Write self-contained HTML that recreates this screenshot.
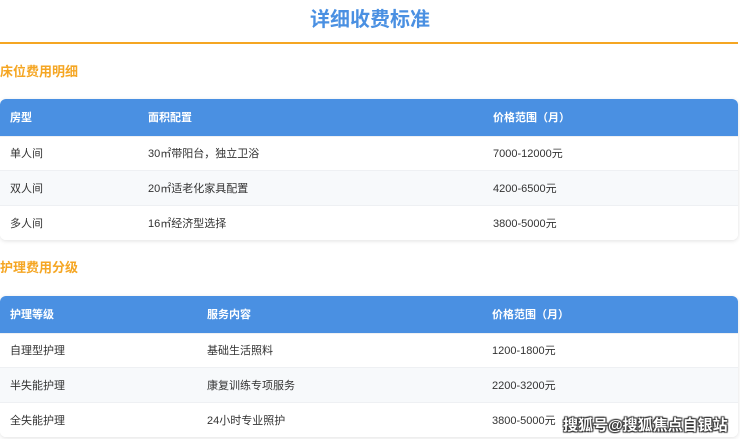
<!DOCTYPE html>
<html><head><meta charset="utf-8"><style>
*{margin:0;padding:0;box-sizing:border-box}
body{width:740px;height:439px;overflow:hidden;background:#fff;font-family:"Liberation Sans","Noto Sans CJK SC",sans-serif;position:relative}
h1{position:absolute;top:6px;left:0;width:740px;text-align:center;color:#4a90e2;font-size:20px;font-weight:bold;line-height:28px}
.line{position:absolute;top:42px;left:0;width:738px;height:2px;background:#f5a623}
h2{position:absolute;left:0;color:#f5a623;font-size:13px;font-weight:bold;line-height:18px}
table{position:absolute;left:0;width:738px;border-collapse:collapse;border-radius:6px;overflow:hidden;box-shadow:0 1px 4px rgba(0,0,0,.12);font-size:11px;color:#333}
th{background:#4a90e2;color:#fff;text-align:left;font-weight:bold;height:37px;padding-left:10px}
td{height:34.5px;padding-left:10px;border-top:1px solid #eef0f3;background:#fff}
tr:nth-child(3) td{background:#f7f9fb}
.wm{position:absolute;left:563px;top:414px;font-size:15px;font-weight:bold;color:#fff;text-shadow:0 0 1px #333,1px 1px 1px #333,-1px -1px 1px #333,1px -1px 1px #333,-1px 1px 1px #333}
</style></head><body>
<h1>详细收费标准</h1>
<div class="line"></div>
<h2 style="top:63px">床位费用明细</h2>
<table style="top:99px">
<tr><th style="width:138px">房型</th><th style="width:345px">面积配置</th><th>价格范围（月）</th></tr>
<tr><td>单人间</td><td>30㎡带阳台，独立卫浴</td><td>7000-12000元</td></tr>
<tr><td>双人间</td><td>20㎡适老化家具配置</td><td>4200-6500元</td></tr>
<tr><td>多人间</td><td>16㎡经济型选择</td><td>3800-5000元</td></tr>
</table>
<h2 style="top:259px">护理费用分级</h2>
<table style="top:296px">
<tr><th style="width:197px">护理等级</th><th style="width:285px">服务内容</th><th>价格范围（月）</th></tr>
<tr><td>自理型护理</td><td>基础生活照料</td><td>1200-1800元</td></tr>
<tr><td>半失能护理</td><td>康复训练专项服务</td><td>2200-3200元</td></tr>
<tr><td>全失能护理</td><td>24小时专业照护</td><td>3800-5000元</td></tr>
</table>
<div class="wm">搜狐号@搜狐焦点自银站</div>
</body></html>
